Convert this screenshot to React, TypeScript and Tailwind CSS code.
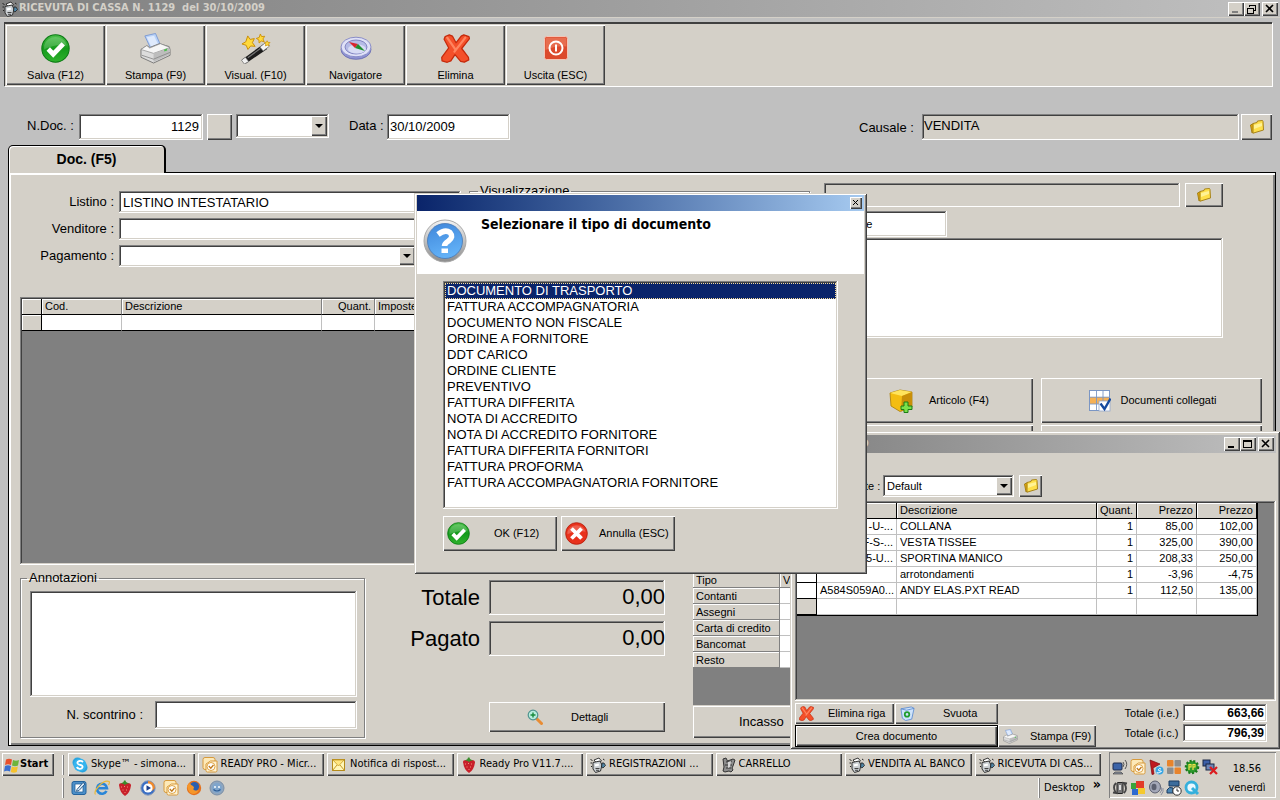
import React, { useState } from 'react';

const RAISED = 'bg-[#d4d0c8] shadow-[inset_1px_1px_#fff,inset_-1px_-1px_#404040,inset_-2px_-2px_#808080]';
const SUNKEN = 'shadow-[inset_-1px_-1px_#fff,inset_1px_1px_#808080,inset_-2px_-2px_#d4d0c8,inset_2px_2px_#404040]';

const DOCUMENT_TYPES = [
  'DOCUMENTO DI TRASPORTO',
  'FATTURA ACCOMPAGNATORIA',
  'DOCUMENTO NON FISCALE',
  'ORDINE A FORNITORE',
  'DDT CARICO',
  'ORDINE CLIENTE',
  'PREVENTIVO',
  'FATTURA DIFFERITA',
  'NOTA DI ACCREDITO',
  'NOTA DI ACCREDITO FORNITORE',
  'FATTURA DIFFERITA FORNITORI',
  'FATTURA PROFORMA',
  'FATTURA ACCOMPAGNATORIA FORNITORE',
];

const CART_ROWS = [
  { code: '-U-...', name: 'COLLANA', qty: '1', net: '85,00', gross: '102,00' },
  { code: 'F-S-...', name: 'VESTA TISSEE', qty: '1', net: '325,00', gross: '390,00' },
  { code: '5-U...', name: 'SPORTINA MANICO', qty: '1', net: '208,33', gross: '250,00' },
  { code: '', name: 'arrotondamenti', qty: '1', net: '-3,96', gross: '-4,75' },
  { code: 'A584S059A0...', name: 'ANDY ELAS.PXT READ', qty: '1', net: '112,50', gross: '135,00' },
];

/* ---------- icons ---------- */

function OkIcon({ className }: { className: string }) {
  return (
    <svg viewBox="0 0 28 28" className={className}>
      <defs>
        <linearGradient id="okg" x1="0" y1="0" x2="0" y2="1">
          <stop offset="0" stopColor="#4cc04a" />
          <stop offset="0.5" stopColor="#149a1c" />
          <stop offset="1" stopColor="#2fb32d" />
        </linearGradient>
      </defs>
      <circle cx="14" cy="14" r="13.2" fill="url(#okg)" stroke="#0b7a14" strokeWidth="1" />
      <path d="M3 11 A11.5 11.5 0 0 1 25 11 Q14 9 3 15Z" fill="#fff" opacity="0.18" />
      <path d="M7 14.5l4.8 5L21.5 9.5" fill="none" stroke="#fff" strokeWidth="4.6" strokeLinejoin="miter" strokeLinecap="butt" />
    </svg>
  );
}

function CancelIcon({ className }: { className: string }) {
  return (
    <svg viewBox="0 0 28 28" className={className}>
      <circle cx="14" cy="14" r="13.2" fill="#e8321c" stroke="#b51d0c" strokeWidth="1" />
      <path d="M3 12 A11.5 11.5 0 0 1 25 12 Q14 9 3 15Z" fill="#fff" opacity="0.22" />
      <path d="M9.500 9.500l9 9M18.500 9.500l-9 9" stroke="#fff" strokeWidth="4.600" strokeLinecap="square" />
    </svg>
  );
}

function PrinterIcon({ className }: { className: string }) {
  return (
    <svg viewBox="0 0 32 32" className={className}>
      <path d="M5 3l11-2.500 5 11.500-10 4z" fill="#b9d2f7" stroke="#6d8fd0" strokeWidth="0.8" />
      <path d="M7 4.500l7.500-1.600 4 8.500-7 2.500z" fill="#dfeafc" />
      <path d="M1 17l6-4 3 2 10-4 10 3 1 3v6l-17 8L1 25z" fill="#dcdcdc" stroke="#6f6f6f" strokeWidth="0.9" />
      <path d="M1 17l13 4 17-6-10-4-11 4.500-3-2.500z" fill="#f6f6f6" stroke="#8a8a8a" strokeWidth="0.7" />
      <path d="M14 21v9l17-8v-6z" fill="#bdbdbd" />
      <path d="M2 23l12 4 17-7" fill="none" stroke="#8a8a8a" strokeWidth="0.9" />
      <path d="M25 17l3-1v2l-3 1z" fill="#4fc04f" />
    </svg>
  );
}

function WandIcon({ className }: { className: string }) {
  return (
    <svg viewBox="0 0 32 32" className={className}>
      <path d="M2 27.500L24 11.500l4 5L6 31.500z" fill="#1c1c1c" />
      <path d="M1.500 28l4-3 3.500 4.500-4.500 2.500z" fill="#f0f0f0" stroke="#666" strokeWidth="0.7" />
      <path d="M20.500 14.500l6.500-5 3.500 4-6.500 5z" fill="#f4f4f4" stroke="#666" strokeWidth="0.7" />
      <path d="M8 25.500L21 16" stroke="#777" strokeWidth="1.2" />
      <path d="M8 3l2.4 3.6 4.4-.8-2 4.2 2.8 3.8-4.6-.4L8.200 17l-1.800-4.300L2 11.300 6 9z" fill="#ffd93b" stroke="#c98d06" strokeWidth="1" />
      <path d="M21 1l1.300 2.700 3.200-.3-1.800 2.700 1.300 2.900-3-.7-2.300 2-.2-3.100-2.700-1.600 3-1z" fill="#ffd93b" stroke="#c98d06" strokeWidth="0.9" />
      <path d="M28 8l.9 1.700 2.100.1-1.400 1.500.4 2-1.900-.8-1.800.9.200-2.100-1.300-1.500 2-.3z" fill="#ffd93b" stroke="#c98d06" strokeWidth="0.7" />
    </svg>
  );
}

function CompassIcon({ className }: { className: string }) {
  return (
    <svg viewBox="0 0 32 24" className={className}>
      <ellipse cx="16" cy="13.500" rx="15" ry="9.800" fill="#8f93d2" stroke="#6468ad" strokeWidth="0.8" />
      <ellipse cx="16" cy="11" rx="15" ry="9.800" fill="#dfe1f7" stroke="#8185c4" strokeWidth="0.9" />
      <ellipse cx="16" cy="11" rx="11" ry="7" fill="#b5bbe6" stroke="#6e72b5" strokeWidth="0.8" />
      <ellipse cx="17" cy="13" rx="9" ry="4.600" fill="#d8dcf5" />
      <path d="M9 6l9 2-3 4z" fill="#d8262d" />
      <path d="M25 15l-7-7-3 4z" fill="#1e8e2e" />
    </svg>
  );
}

function RedXIcon({ className }: { className: string }) {
  return (
    <svg viewBox="0 0 28 28" className={className}>
      <path
        d="M4 2.500L8 .8 11 2l3.500 6.500L19.500 2 22 .8l5 1.700.5 2L20 14l6.500 8.500.3 2.500-4.300 2.200-3.500-.7L13.500 20l-4 6L6 27.300 1 26l-.3-3.500L7.500 13.500 3 5z"
        fill="#f4502a"
        stroke="#c42a0c"
        strokeWidth="1.200"
        strokeLinejoin="round"
      />
      <path d="M6 3.500l8 11.500M23.500 3.500L13 17" stroke="#ff8560" strokeWidth="2.200" fill="none" strokeLinecap="round" />
    </svg>
  );
}

function PowerIcon({ className }: { className: string }) {
  return (
    <svg viewBox="0 0 24 24" className={className}>
      <rect x="0.500" y="0.500" width="23" height="23" rx="2" fill="#dc4a2c" stroke="#f3c4b6" />
      <path d="M1.500 1.500h21v9Q12 9 1.500 14z" fill="#f08a6d" opacity="0.550" />
      <circle cx="12" cy="12" r="6.500" fill="none" stroke="#fff" strokeWidth="2" />
      <path d="M12 8.500v7" stroke="#fff" strokeWidth="2" />
    </svg>
  );
}

function FolderIcon() {
  return (
    <svg viewBox="0 0 16 16" className="h-4 w-4">
      <path d="M1.500 6l3-1.500V13l-1.500 1z" fill="#e2a70b" stroke="#9c7a12" strokeWidth="0.900" />
      <path d="M4 4.500l4-1 .5-1.500 5-.5.500 1 .500 8.500L4 14.200z" fill="#ffe04a" stroke="#a8841a" strokeWidth="1" />
      <path d="M5 6l8-2v3L5 10z" fill="#fff6a8" opacity="0.800" />
    </svg>
  );
}

function QuestionIcon() {
  return (
    <svg viewBox="0 0 44 44" className="h-11 w-11 shrink-0">
      <defs>
        <linearGradient id="qring" x1="0" y1="0" x2="0" y2="1">
          <stop offset="0" stopColor="#f4f4f4" />
          <stop offset="1" stopColor="#8c8c8c" />
        </linearGradient>
        <linearGradient id="qblue" x1="0" y1="0" x2="0.300" y2="1">
          <stop offset="0" stopColor="#3f86da" />
          <stop offset="1" stopColor="#62b1f7" />
        </linearGradient>
      </defs>
      <circle cx="22" cy="22" r="21" fill="url(#qring)" stroke="#a8a8a8" />
      <circle cx="22" cy="22" r="17.500" fill="url(#qblue)" stroke="#4677b4" strokeWidth="0.800" />
      <path d="M15 15.500Q22 10 27 13.500 31 18 25.500 22q-4 2.500-4 5" fill="none" stroke="#fff" strokeWidth="5.500" />
      <rect x="18.500" y="29.500" width="6.500" height="4.500" fill="#fff" />
    </svg>
  );
}

function BoxIcon() {
  return (
    <svg viewBox="0 0 24 24" className="h-6 w-6">
      <path d="M1 4l10-3 12 2v15l-12 4.500L2 17z" fill="#f3bd12" stroke="#a87c08" strokeWidth="0.800" />
      <path d="M1 4l10-3 12 2-10 4z" fill="#ffe45c" />
      <path d="M13 7l10-4v15l-11 4.500z" fill="#c98f08" />
      <path d="M15 13h4v4h4v3.500h-4v3h-4v-3h-3V17h3z" fill="#7be04a" stroke="#1d7d16" strokeWidth="1" />
    </svg>
  );
}

function TableCheckIcon() {
  return (
    <svg viewBox="0 0 22 22" className="h-[22px] w-[22px]">
      <rect x="0.500" y="0.500" width="20" height="20" fill="#fff" stroke="#7b96c4" />
      <rect x="1" y="7" width="19" height="7" fill="#f6b155" />
      <path d="M7.500 1v20M14 1v20M1 7.200h20M1 14h20" stroke="#7b96c4" strokeWidth="0.900" />
      <rect x="10" y="11" width="11" height="10" fill="#fff" stroke="#93a8cc" strokeWidth="0.800" />
      <path d="M11.500 13.500l4 5.500L21.500 8.500" fill="none" stroke="#164a9e" strokeWidth="2.400" />
    </svg>
  );
}

function ZoomIcon() {
  return (
    <svg viewBox="0 0 16 16" className="h-4 w-4">
      <path d="M9.500 9.500l5 5" stroke="#e88c34" strokeWidth="3" strokeLinecap="round" />
      <circle cx="6" cy="6" r="4.800" fill="#b8ecdc" stroke="#4f938f" strokeWidth="1.200" />
      <path d="M6 3.500v5M3.500 6h5" stroke="#178a3c" strokeWidth="1.400" />
    </svg>
  );
}

function BinIcon() {
  return (
    <svg viewBox="0 0 16 16" className="h-[15px] w-[15px]">
      <path d="M1 3l11-2 3 1.500L12.500 14 6 15.500 2.500 13z" fill="#cfe3fb" stroke="#5b8bd0" strokeWidth="0.900" />
      <path d="M1 3l6 1.500 8-2" fill="none" stroke="#5b8bd0" strokeWidth="0.900" />
      <circle cx="7.500" cy="9" r="2.400" fill="none" stroke="#1f9c2c" strokeWidth="1.900" />
    </svg>
  );
}

function RegisterIcon() {
  return (
    <svg viewBox="0 0 16 16" className="h-4 w-4 shrink-0">
      <path d="M4 3l5-2 2.500 3-5 2z" fill="#fff" stroke="#222" strokeWidth="0.900" />
      <path d="M3 5.500L10 4l2 4-1.500 6-5 1.500L3 12z" fill="#c9ced2" stroke="#333" strokeWidth="1" />
      <path d="M4.500 7.500l4-1 .8 2-4 1z" fill="#fff" />
      <path d="M5.500 11.500h4M6 13.300h3" stroke="#444" strokeWidth="1" />
      <path d="M12 6h2l1.500 2.500L13 11l-1.500-1z" fill="#4f83a3" stroke="#222" strokeWidth="0.800" />
      <path d="M0.500 2.500l2 1M0.500 6h1.500M13 2l1.500 1M1 9.500h1" stroke="#222" strokeWidth="1" />
    </svg>
  );
}

function CartIcon() {
  return (
    <svg viewBox="0 0 16 16" className="h-4 w-4 shrink-0">
      <path d="M3 2l3-1 1.500 3L13 2l2 1-2 6-1 2 1 2-2 2-2-1-4 1-2-1 1-4z" fill="#8d8d8d" stroke="#333" strokeWidth="1" />
      <path d="M6 5l6-1M5 8h7M6 11h5" stroke="#333" strokeWidth="1" />
      <path d="M8 5l3-1-1 6-2 1z" fill="#d6d6d6" />
    </svg>
  );
}

function StrawberryIcon() {
  return (
    <svg viewBox="0 0 16 16" className="h-4 w-4 shrink-0">
      <path d="M2 5q0-2 3-2h6q3 0 3 2.500Q13 13 8 16 3 13 2 5z" fill="#c8202a" />
      <path d="M4 7h1M7 6.500h1M10 7h1M5.500 10h1M9 10h1M7.500 12.500h1" stroke="#f58b7a" strokeWidth="1" />
      <path d="M4 3.500L6.500 2 7 .5h1.500L9 2l3 1.500-3 .5-1 1.500L7 4z" fill="#3a8c2c" />
    </svg>
  );
}

function OutlookIcon() {
  return (
    <svg viewBox="0 0 16 16" className="h-4 w-4 shrink-0">
      <rect x="1" y="0.500" width="12" height="12" rx="2" fill="#fde9b8" stroke="#d79a3c" />
      <path d="M4 7l4.500-3H15v9.500q0 1.500-1.500 1.500h-8Q4 15 4 13.500z" fill="#fff3d4" stroke="#d79a3c" />
      <circle cx="9" cy="9.500" r="4" fill="#fff" stroke="#e0a546" />
      <path d="M6.800 9l2 2.200L11.500 8" fill="none" stroke="#c07a1c" strokeWidth="1.300" />
    </svg>
  );
}

function MailIcon() {
  return (
    <svg viewBox="0 0 16 16" className="h-4 w-4 shrink-0">
      <rect x="1.500" y="2.500" width="12" height="11" fill="#fff6b8" stroke="#b58b1b" />
      <path d="M1.500 13.500l4.500-5.500M13.500 13.500L9 8" fill="none" stroke="#c79a26" strokeWidth="1" />
      <path d="M2 3h11L7.500 9z" fill="#ffe680" stroke="#c79a26" strokeWidth="0.800" />
    </svg>
  );
}

function SkypeIcon() {
  return (
    <svg viewBox="0 0 16 16" className="h-4 w-4 shrink-0">
      <circle cx="5.500" cy="5.500" r="5" fill="#2aa5e0" />
      <circle cx="10.500" cy="10.500" r="5" fill="#2aa5e0" />
      <circle cx="8" cy="8" r="6.500" fill="#35b4ee" />
      <path d="M11 5Q9.500 3.600 7.500 4 5 4.500 5.500 6.300 6 7.600 8.500 8q2.500.5 2 2.200Q10 12 7.500 11.800 5.500 11.500 4.800 10" fill="none" stroke="#fff" strokeWidth="1.800" />
    </svg>
  );
}

function WindowsIcon({ className }: { className: string }) {
  return (
    <svg viewBox="0 0 16 16" className={className}>
      <path d="M2 2.500Q5 1 8 2.500L7 8Q4 6.500 1 8z" fill="#e8502c" />
      <path d="M9 3q3 1.500 6 0l-1 5.500q-3 1.500-6 0z" fill="#6fb43c" />
      <path d="M1 9q3-1.500 6 0l-1 5.500Q3 13 0 14.500z" fill="#3a6fd0" />
      <path d="M7.800 9.500q3 1.500 6 0l-1 5.500q-3 1.500-6 0z" fill="#f6c22c" />
    </svg>
  );
}

function QuickLaunchIcons() {
  return (
    <>
      <button aria-label="Mostra desktop">
        <svg viewBox="0 0 16 16" className="h-4 w-4">
          <rect x="1" y="1.500" width="14" height="13" rx="2" fill="#4c8fc9" stroke="#23629c" />
          <path d="M4 4h8v8H4z" fill="#fff" stroke="#23629c" strokeWidth="0.800" />
          <path d="M6 9.500l6-7 2 1.500-6 6.500-2.500.8z" fill="#d7e7f6" stroke="#1c4f80" strokeWidth="0.900" />
        </svg>
      </button>
      <button aria-label="Internet Explorer">
        <svg viewBox="0 0 16 16" className="h-4 w-4">
          <path d="M12.500 11A5 5 0 1 1 13 8.300H4" fill="none" stroke="#2a86d8" strokeWidth="2.600" />
          <path d="M1.500 14.500Q-.5 12 5 6T15 1.500q1 1-.5 3.500" fill="none" stroke="#e9b93a" strokeWidth="1.200" />
        </svg>
      </button>
      <button aria-label="Ready Pro"><StrawberryIcon /></button>
      <button aria-label="Media Player">
        <svg viewBox="0 0 16 16" className="h-4 w-4">
          <circle cx="8" cy="8" r="7.200" fill="#3b6fc4" stroke="#8a9cba" />
          <path d="M8 1a7 7 0 0 1 7 7l-3 3L8 4z" fill="#f08a2c" />
          <circle cx="8" cy="8" r="4.600" fill="#fff" />
          <path d="M6.500 5.300L11 8l-4.500 2.700z" fill="#1d3f8c" />
        </svg>
      </button>
      <button aria-label="Outlook"><OutlookIcon /></button>
      <button aria-label="Firefox">
        <svg viewBox="0 0 16 16" className="h-4 w-4">
          <circle cx="8" cy="8" r="7.200" fill="#e4701c" />
          <circle cx="8.500" cy="6.500" r="4.600" fill="#2c5fae" />
          <path d="M1 6q2-3 3-3 0 2 3 3 2 2 0 3 2 3 6 1-2 4-6 4-5-1-6-8z" fill="#f5962a" />
        </svg>
      </button>
      <button aria-label="Browser">
        <svg viewBox="0 0 16 16" className="h-4 w-4">
          <circle cx="8" cy="8" r="7" fill="#8fa6bf" stroke="#7b8fa6" />
          <circle cx="8" cy="8" r="5" fill="#7fa5cc" />
          <path d="M5 6h2v2H5zM9 6h2v2H9z" fill="#d9e6f2" />
          <path d="M4.500 9.500q3.500 3 7 0" fill="none" stroke="#2d5c94" strokeWidth="1.200" />
        </svg>
      </button>
    </>
  );
}

function TrayIcons() {
  return (
    <div className="grid grid-cols-6 gap-x-[2px] gap-y-[2px]">
      <svg viewBox="0 0 16 16" className="h-4 w-4">
        <rect x="1" y="4" width="9" height="7" rx="1" fill="#3c64a8" stroke="#1d2b4c" />
        <path d="M3 13h6l2 2H1z" fill="#8d93a0" stroke="#333" strokeWidth="0.600" />
        <path d="M11 3q2 2 0 5M13 1q3.500 4 0 9" fill="none" stroke="#555" />
      </svg>
      <OutlookIcon />
      <svg viewBox="0 0 16 16" className="h-4 w-4">
        <path d="M2 1l10 4-7 4 1 6-2 .5z" fill="#c01820" stroke="#7c0a10" strokeWidth="0.700" />
        <circle cx="11.500" cy="11.500" r="4" fill="#39a6e4" />
        <path d="M13 10q-2-1-2.500.5t2 1.500-1 1.500-2-.5" fill="none" stroke="#fff" strokeWidth="1" />
      </svg>
      <svg viewBox="0 0 16 16" className="h-4 w-4">
        <rect x="1" y="1" width="6.500" height="6.500" rx="1" fill="#e8842c" />
        <rect x="8.500" y="1" width="6.500" height="6.500" rx="1" fill="#8d8d8d" />
        <rect x="1" y="8.500" width="6.500" height="6.500" rx="1" fill="#8d8d8d" />
        <rect x="8.500" y="8.500" width="6.500" height="6.500" rx="1" fill="#e8842c" />
      </svg>
      <svg viewBox="0 0 16 16" className="h-4 w-4">
        <circle cx="8" cy="8" r="6" fill="#2e9c2e" stroke="#1b7b1b" strokeWidth="2.500" strokeDasharray="2 1.600" />
        <path d="M5 11V5.500h2V8H5M9 11V5.500h2V8H9" fill="none" stroke="#f4e04a" strokeWidth="1.200" />
      </svg>
      <svg viewBox="0 0 16 16" className="h-4 w-4">
        <rect x="1" y="1" width="7" height="6" fill="#3d5fa8" stroke="#1b2645" />
        <rect x="4" y="5" width="8" height="6" fill="#6d86b8" stroke="#1b2645" />
        <path d="M8 8l7 7M15 8l-7 7" stroke="#dc1c20" strokeWidth="2.200" />
      </svg>
      <svg viewBox="0 0 16 16" className="h-4 w-4">
        <path d="M4 3Q0 7 4 13l-3-.5M12 13q4-4 0-10l3 .5" fill="none" stroke="#444" strokeWidth="1.800" />
        <rect x="5" y="2.500" width="6" height="11" rx="1" fill="#777" stroke="#222" />
        <path d="M7 5h2v5H7z" fill="#ddd" />
      </svg>
      <svg viewBox="0 0 16 16" className="h-4 w-4">
        <path d="M6 1h8v7H6z" fill="#e23c28" />
        <path d="M1 3h5v6H1z" fill="#3aa43a" />
        <path d="M2 9h6v6H2z" fill="#2e6ad0" />
        <path d="M8 8h7v6H8z" fill="#f5c92e" />
      </svg>
      <svg viewBox="0 0 16 16" className="h-4 w-4">
        <ellipse cx="7" cy="7" rx="5.500" ry="6" fill="#a4a8b8" stroke="#5c6070" />
        <ellipse cx="6" cy="7" rx="2.500" ry="3.200" fill="#5c6070" />
        <path d="M13 7q2 3-1 6M15 8q1 4-2 7" fill="none" stroke="#8b8fa0" />
      </svg>
      <svg viewBox="0 0 16 16" className="h-4 w-4">
        <path d="M3 1h10v5H3z" fill="#3b6c9c" stroke="#1b3b60" />
        <path d="M1 10q2-4 6-2v5H1z" fill="#4c86b4" stroke="#1b3b60" />
        <circle cx="11" cy="11" r="4.200" fill="#fff" stroke="#333" />
        <path d="M11 8.500V11h2" fill="none" stroke="#333" />
      </svg>
      <svg viewBox="0 0 16 16" className="h-4 w-4">
        <circle cx="7.500" cy="7.500" r="5.500" fill="#e9f8ff" stroke="#35b0dc" strokeWidth="2.800" />
        <path d="M8 8l6 6" stroke="#35b0dc" strokeWidth="3" />
      </svg>
    </div>
  );
}

/* ---------- small building blocks ---------- */

function CaptionButton({ kind, label, disabled }: { kind: 'min' | 'max' | 'restore' | 'close'; label: string; disabled?: boolean }) {
  return (
    <button aria-label={label} className={`flex h-[14px] w-4 items-center justify-center ${RAISED}`}>
      <svg viewBox="0 0 12 10" className="h-[10px] w-3" fill="none" stroke={disabled ? '#808080' : '#000'} shapeRendering="crispEdges">
        {kind === 'min' && <path d="M2 8h6" strokeWidth="2" />}
        {kind === 'max' && <path d="M1.500 1.500h8v7h-8zM1 2h9" />}
        {kind === 'restore' && <path d="M3.500 3V1h6v5H8M1.500 4h6v5h-6zM3 1h7M1 4h7" />}
        {kind === 'close' && <path d="M2 1l7 7M9 1L2 8" strokeWidth="1.600" shapeRendering="auto" />}
      </svg>
    </button>
  );
}

function SelectBox({ label, options, className }: { label: string; options: string[]; className: string }) {
  return (
    <div className={`relative ${className}`}>
      <select aria-label={label} className={`h-full w-full appearance-none rounded-none bg-white px-1 ${SUNKEN}`}>
        {options.map((o) => (
          <option key={o}>{o}</option>
        ))}
      </select>
      <span className={`pointer-events-none absolute top-[2px] right-[2px] bottom-[2px] flex w-4 items-center justify-center ${RAISED}`}>
        <span className="border-x-4 border-t-4 border-x-transparent border-t-black" />
      </span>
    </div>
  );
}

function ToolButton({ label, children }: { label: string; children: React.ReactNode }) {
  return (
    <button className={`flex h-[60px] w-[99px] flex-col items-center justify-end pb-[2px] ${RAISED}`}>
      <span className="flex h-9 items-center justify-center">{children}</span>
      <span className="mt-px leading-4">{label}</span>
    </button>
  );
}

function Toolbar() {
  return (
    <div className="mt-1 mr-2 ml-1 flex gap-px border-t-2 border-l border-[#404040] bg-[#d4d0c8] pt-px pb-px pl-px shadow-[1px_1px_#fff]">
      <ToolButton label="Salva (F12)"><OkIcon className="h-[29px] w-[29px]" /></ToolButton>
      <ToolButton label="Stampa (F9)"><PrinterIcon className="h-[31px] w-[31px]" /></ToolButton>
      <ToolButton label="Visual. (F10)"><WandIcon className="h-[31px] w-[31px]" /></ToolButton>
      <ToolButton label="Navigatore"><CompassIcon className="h-6 w-8" /></ToolButton>
      <ToolButton label="Elimina"><RedXIcon className="h-[29px] w-[29px]" /></ToolButton>
      <ToolButton label="Uscita (ESC)"><PowerIcon className="h-6 w-6" /></ToolButton>
    </div>
  );
}

function DocumentHeader() {
  return (
    <div className="mt-7 flex items-start pr-2 pl-[27px] text-[13px]">
      <label htmlFor="ndoc" className="w-[52px] leading-6">N.Doc. :</label>
      <input id="ndoc" defaultValue="1129" className={`h-[26px] w-[124px] bg-white px-1 pb-[2px] text-right ${SUNKEN}`} />
      <button aria-label="Assegna numero" className={`ml-1 h-[26px] w-[25px] ${RAISED}`} />
      <SelectBox label="Serie" options={['']} className="ml-1 h-6 w-[93px]" />
      <label htmlFor="data" className="ml-5 w-[38px] leading-6">Data :</label>
      <input id="data" defaultValue="30/10/2009" className={`h-[26px] w-[123px] bg-white px-[3px] pb-[2px] ${SUNKEN}`} />
      <label htmlFor="causale" className="ml-auto w-[63px] leading-7">Causale :</label>
      <input id="causale" readOnly defaultValue="VENDITA" className={`h-[26px] w-[317px] bg-[#d4d0c8] px-[2px] pb-1 ${SUNKEN}`} />
      <button aria-label="Apri causale" className={`ml-[2px] flex h-[26px] w-[31px] items-center justify-center ${RAISED}`}><FolderIcon /></button>
    </div>
  );
}

function LinesGrid() {
  const th = 'border-r border-b border-r-[#808080] border-b-black bg-[#d4d0c8] px-[3px] font-normal shadow-[inset_1px_1px_#fff]';
  return (
    <div className={`mt-[30px] h-[268px] bg-[#808080] p-[2px] ${SUNKEN}`}>
      <table className="w-full table-fixed border-separate border-spacing-0 text-left leading-[15px]">
        <colgroup>
          <col className="w-5" />
          <col className="w-20" />
          <col className="w-[200px]" />
          <col className="w-[53px]" />
          <col />
        </colgroup>
        <thead>
          <tr>
            <th className={`${th} border-r-black`} />
            <th className={th}>Cod.</th>
            <th className={th}>Descrizione</th>
            <th className={`${th} text-right`}>Quant.</th>
            <th className={th}>Imposte</th>
          </tr>
        </thead>
        <tbody>
          <tr className="h-4">
            <td className="border-r border-b border-black bg-[#d4d0c8] shadow-[inset_1px_1px_#fff]" />
            <td className="border-r border-b border-r-[#c0c0c0] border-b-black bg-white" />
            <td className="border-r border-b border-r-[#c0c0c0] border-b-black bg-white" />
            <td className="border-r border-b border-r-[#c0c0c0] border-b-black bg-white" />
            <td className="border-b border-black bg-white" />
          </tr>
        </tbody>
      </table>
    </div>
  );
}

function DetailForm() {
  return (
    <div className="flex gap-2 text-[13px]">
      <div className="grid w-[441px] grid-cols-[94px_1fr] items-center gap-x-[5px] gap-y-[5px] pt-2">
        <label htmlFor="listino" className="text-right">Listino :</label>
        <input id="listino" defaultValue="LISTINO INTESTATARIO" className={`h-[22px] bg-white px-1 ${SUNKEN}`} />
        <label htmlFor="venditore" className="text-right">Venditore :</label>
        <input id="venditore" className={`h-[22px] bg-white px-1 ${SUNKEN}`} />
        <span className="text-right">Pagamento :</span>
        <SelectBox label="Pagamento" options={['']} className="h-[22px] w-[298px]" />
      </div>
      <fieldset className="h-20 w-[341px] border border-[#808080] shadow-[inset_1px_1px_#fff,1px_1px_#fff]">
        <legend className="ml-2 px-[2px] leading-4">Visualizzazione</legend>
      </fieldset>
    </div>
  );
}

function CustomerPanel() {
  return (
    <div className="flex w-[451px] shrink-0 flex-col">
      <div className="flex flex-col gap-1 pl-[13px]">
        <div className="flex gap-[5px]">
          <input aria-label="Intestatario" readOnly className={`h-6 w-[356px] bg-[#d4d0c8] ${SUNKEN}`} />
          <button aria-label="Apri intestatario" className={`flex h-6 w-[38px] items-center justify-center ${RAISED}`}><FolderIcon /></button>
        </div>
        <input aria-label="Destinazione" defaultValue="Generale" className={`h-[26px] w-[123px] bg-white px-[3px] ${SUNKEN}`} />
        <textarea aria-label="Indirizzo" className={`-mt-[3px] h-[100px] w-[399px] resize-none bg-white ${SUNKEN}`} />
      </div>
      <div className="mt-10 grid grid-cols-2 gap-x-2 gap-y-[2px]">
        <button className={`flex h-[45px] items-center gap-4 pl-[78px] ${RAISED}`}><BoxIcon />Articolo (F4)</button>
        <button className={`flex h-[45px] items-center gap-[10px] pl-12 ${RAISED}`}><TableCheckIcon />Documenti collegati</button>
        <button aria-label="Seleziona" className={`h-[46px] ${RAISED}`} />
        <button aria-label="Collega" className={`h-[46px] ${RAISED}`} />
      </div>
    </div>
  );
}

function Payments() {
  return (
    <div className="flex w-[200px] flex-col">
      <div className="h-[133px] bg-[#808080]">
        <table className="w-full table-fixed border-separate border-spacing-0 text-left leading-[14px]">
          <colgroup>
            <col className="w-[87px]" />
            <col />
          </colgroup>
          <tbody>
            {['Tipo', 'Contanti', 'Assegni', 'Carta di credito', 'Bancomat', 'Resto'].map((t) => (
              <tr key={t} className="h-4">
                <th className="border-r border-b border-[#808080] bg-[#d4d0c8] p-0 pl-[3px] font-normal shadow-[inset_1px_1px_#fff]">{t}</th>
                <td className={t === 'Tipo' ? 'border-b border-[#808080] bg-[#d4d0c8] px-[3px] py-0 shadow-[inset_1px_1px_#fff]' : 'border-b border-[#c0c0c0] bg-white p-0'}>
                  {t === 'Tipo' ? 'Valore' : ''}
                </td>
              </tr>
            ))}
          </tbody>
        </table>
      </div>
      <button className={`mt-px h-8 pl-[46px] text-left text-[13px] ${RAISED}`}>Incasso</button>
    </div>
  );
}

function FooterPanel() {
  return (
    <div className="mt-[5px] flex items-start">
      <fieldset className="h-[168px] w-[345px] border border-[#808080] pr-[7px] pl-[9px] text-[13px] shadow-[inset_1px_1px_#fff,1px_1px_#fff]">
        <legend className="-ml-[3px] px-[2px] leading-4">Annotazioni</legend>
        <textarea aria-label="Annotazioni" className={`mt-[5px] block h-[106px] w-full resize-none bg-white ${SUNKEN}`} />
        <div className="mt-1 flex items-center">
          <label htmlFor="scontrino" className="w-[125px] pr-3 text-right">N. scontrino :</label>
          <input id="scontrino" className={`h-7 min-w-0 flex-1 bg-white px-1 ${SUNKEN}`} />
        </div>
      </fieldset>
      <div className="ml-10 grid w-[260px] grid-cols-[75px_176px] items-center gap-x-[9px] gap-y-[6px] pt-[10px] text-[22px] leading-8">
        <label htmlFor="totale" className="text-right">Totale</label>
        <input id="totale" readOnly defaultValue="0,00" className={`h-[35px] bg-[#d4d0c8] pb-px text-right ${SUNKEN}`} />
        <label htmlFor="pagato" className="text-right">Pagato</label>
        <input id="pagato" readOnly defaultValue="0,00" className={`h-[35px] bg-[#d4d0c8] pb-px text-right ${SUNKEN}`} />
        <button className={`col-start-2 mt-10 flex h-[30px] items-center gap-7 pl-[38px] text-[11px] ${RAISED}`}><ZoomIcon />Dettagli</button>
      </div>
      <div className="ml-7 pt-[2px]"><Payments /></div>
    </div>
  );
}

function CartWindow() {
  const th = 'border-r border-b border-black bg-[#d4d0c8] px-[3px] font-normal shadow-[inset_1px_1px_#fff]';
  const td = 'border-r border-b border-[#c0c0c0] bg-white px-[3px]';
  return (
    <section aria-label="Carrello" className="absolute right-0 bottom-[51px] flex h-[318px] w-[490px] flex-col bg-[#d4d0c8] pt-1 pr-1 pb-[2px] pl-[5px] shadow-[inset_1px_1px_#d4d0c8,inset_-1px_-1px_#404040,inset_2px_2px_#fff,inset_-2px_-2px_#808080]">
      <header className="flex h-[18px] items-center bg-linear-to-r from-[#808080] to-[#c0c0c0] pr-[2px] text-[#d4d0c8]">
        <CartIcon />
        <h2 className="flex-1 font-['DejaVu_Sans_Condensed','DejaVu_Sans',sans-serif] font-bold">CARRELLO</h2>
        <CaptionButton kind="min" label="Riduci" />
        <CaptionButton kind="max" label="Ingrandisci" />
        <span className="w-[2px]" />
        <CaptionButton kind="close" label="Chiudi" />
      </header>
      <div className="mt-[22px] flex items-center pl-[45px]">
        <span className="w-[39px] text-right whitespace-nowrap">Cliente :</span>
        <SelectBox label="Cliente" options={['Default']} className="ml-1 h-[22px] w-[131px]" />
        <button aria-label="Apri cliente" className={`ml-[5px] flex h-[22px] w-[23px] items-center justify-center ${RAISED}`}><FolderIcon /></button>
      </div>
      <div className={`mt-1 flex-1 bg-[#808080] p-[2px] ${SUNKEN}`}>
        <table className="w-[461px] table-fixed border-separate border-spacing-0 border-r border-b border-black leading-[15px]">
          <colgroup>
            <col className="w-5" />
            <col className="w-20" />
            <col className="w-[200px]" />
            <col className="w-10" />
            <col className="w-[60px]" />
            <col className="w-[60px]" />
          </colgroup>
          <thead>
            <tr className="text-right">
              <th className={th} />
              <th className={`${th} text-left`}>Cod.</th>
              <th className={`${th} text-left`}>Descrizione</th>
              <th className={th}>Quant.</th>
              <th className={th}>Prezzo</th>
              <th className={th}>Prezzo</th>
            </tr>
          </thead>
          <tbody className="text-right">
            {CART_ROWS.map((r) => (
              <tr key={r.name}>
                <td className="border-r border-b border-black bg-white" />
                <td className={`${td} whitespace-nowrap`}>{r.code}</td>
                <td className={`${td} text-left`}>{r.name}</td>
                <td className={td}>{r.qty}</td>
                <td className={td}>{r.net}</td>
                <td className={td}>{r.gross}</td>
              </tr>
            ))}
            <tr className="h-4">
              <td className="border-r border-b border-black bg-[#d4d0c8]" />
              <td className={td} />
              <td className={td} />
              <td className={td} />
              <td className={td} />
              <td className={td} />
            </tr>
          </tbody>
        </table>
      </div>
      <div className="mt-[2px] flex items-start justify-between">
        <div className="flex flex-col gap-px">
          <div className="flex gap-px">
            <button className={`flex h-[21px] w-[99px] items-center gap-[14px] pl-1 ${RAISED}`}><RedXIcon className="h-[15px] w-[15px]" />Elimina riga</button>
            <button className={`flex h-[21px] w-[103px] items-center gap-7 pl-[5px] ${RAISED}`}><BinIcon />Svuota</button>
          </div>
          <div className="flex">
            <button className={`h-[22px] w-[203px] border border-black ${RAISED}`}>Crea documento</button>
            <button className={`flex h-[22px] w-[98px] items-center gap-3 pl-[5px] ${RAISED}`}><PrinterIcon className="h-[15px] w-[15px]" />Stampa (F9)</button>
          </div>
        </div>
        <div className="grid grid-cols-[auto_84px] items-center gap-x-1 gap-y-[2px] pt-px pr-[9px]">
          <label htmlFor="totie">Totale (i.e.)</label>
          <input id="totie" readOnly defaultValue="663,66" className={`h-[18px] bg-white pr-[3px] text-right text-[12px] font-bold ${SUNKEN}`} />
          <label htmlFor="totic">Totale (i.c.)</label>
          <input id="totic" readOnly defaultValue="796,39" className={`h-[18px] bg-white pr-[3px] text-right text-[12px] font-bold ${SUNKEN}`} />
        </div>
      </div>
    </section>
  );
}

function TypeDialog() {
  const [selected, setSelected] = useState(DOCUMENT_TYPES[0]);

  return (
    <div role="dialog" aria-labelledby="dlg-title" className="absolute top-[193px] left-[414px] w-[453px] bg-[#d4d0c8] p-[3px] pt-[2px] shadow-[inset_1px_1px_#d4d0c8,inset_-1px_-1px_#404040,inset_2px_2px_#fff,inset_-2px_-2px_#808080]">
      <div className="flex h-4 items-center justify-end bg-linear-to-r from-[#0a246a] to-[#a6caf0] pr-[2px]">
        <button aria-label="Chiudi" className={`flex h-3 w-3 items-center justify-center ${RAISED}`}>
          <svg viewBox="0 0 8 8" className="h-2 w-2" stroke="#000"><path d="M1 1l5 5M6 1L1 6" /></svg>
        </button>
      </div>
      <div className="flex h-[63px] items-start gap-[14px] bg-white pl-[6px]">
        <span className="mt-2"><QuestionIcon /></span>
        <h1 id="dlg-title" className="mt-1 font-['DejaVu_Sans_Condensed','DejaVu_Sans',sans-serif] text-[14px] leading-[18px] font-bold">Selezionare il tipo di documento</h1>
      </div>
      <div className="px-[26px] pt-[7px] pb-5">
        <select
          size={14}
          aria-label="Tipo di documento"
          value={selected}
          onChange={(e) => setSelected(e.target.value)}
          className={`block h-[228px] w-full overflow-hidden rounded-none bg-white p-[2px] text-[13px] ${SUNKEN}`}
        >
          {DOCUMENT_TYPES.map((t) => (
            <option
              key={t}
              className="h-4 min-h-0 px-[2px] py-0 leading-4 checked:bg-[linear-gradient(#0a246a,#0a246a)] checked:outline checked:-outline-offset-1 checked:outline-dotted checked:outline-[#f5db95] checked:[-webkit-text-fill-color:#fff]"
            >
              {t}
            </option>
          ))}
        </select>
        <div className="mt-[7px] flex gap-1">
          <button className={`flex h-[35px] w-[114px] items-center gap-6 pl-1 ${RAISED}`}><OkIcon className="h-[23px] w-[23px]" />OK (F12)</button>
          <button className={`flex h-[35px] w-[114px] items-center gap-[11px] pl-1 ${RAISED}`}><CancelIcon className="h-[23px] w-[23px]" />Annulla (ESC)</button>
        </div>
      </div>
    </div>
  );
}

function Taskbar() {
  const tasks = [
    { icon: <SkypeIcon />, text: 'Skype™ - simona...' },
    { icon: <OutlookIcon />, text: 'READY PRO - Micr...' },
    { icon: <MailIcon />, text: 'Notifica di rispost...' },
    { icon: <StrawberryIcon />, text: 'Ready Pro V11.7....' },
    { icon: <RegisterIcon />, text: 'REGISTRAZIONI ...' },
    { icon: <CartIcon />, text: 'CARRELLO' },
    { icon: <RegisterIcon />, text: 'VENDITA AL BANCO' },
    { icon: <RegisterIcon />, text: 'RICEVUTA DI CAS...' },
  ];

  return (
    <footer className="flex h-[50px] gap-2 border-t border-white bg-[#d4d0c8] pt-px pr-1 pl-[2px] font-['DejaVu_Sans_Condensed','DejaVu_Sans',sans-serif]">
      <button className={`mt-px flex h-[23px] w-[52px] items-center pl-[2px] font-bold ${RAISED}`}><WindowsIcon className="h-4 w-4 shrink-0" />Start</button>
      <div className="flex min-w-0 flex-1 flex-col">
        <div className="flex h-[25px] items-center gap-[3px]">
          <span className="mr-px h-5 w-[2px] shrink-0 border-r border-l border-r-[#808080] border-l-white" />
          {tasks.map((t) => (
            <button key={t.text} className={`flex h-[23px] min-w-0 flex-1 items-center gap-[3px] pl-1 whitespace-nowrap ${RAISED}`}>
              {t.icon}
              <span className="overflow-hidden">{t.text}</span>
            </button>
          ))}
        </div>
        <div className="flex h-[22px] items-center">
          <span className="mr-[7px] h-5 w-[2px] border-r border-l border-r-[#808080] border-l-white" />
          <div className="flex gap-[7px]"><QuickLaunchIcons /></div>
          <span className="mr-1 ml-auto h-5 w-[2px] border-r border-l border-r-[#808080] border-l-white" />
          <span>Desktop</span>
          <button aria-label="Altro" className="ml-2 pb-2 text-[14px] font-bold">»</button>
        </div>
      </div>
      <div className="flex h-[46px] w-[167px] shrink-0 pt-[7px] pl-[3px] shadow-[inset_1px_1px_#808080,inset_-1px_-1px_#fff]">
        <TrayIcons />
        <div className="flex flex-1 flex-col items-center leading-[19px] whitespace-nowrap">
          <span>18.56</span>
          <span>venerdì</span>
        </div>
      </div>
    </footer>
  );
}

export default function App() {
  return (
    <div className="relative flex min-h-screen flex-col overflow-hidden bg-[#c0c0c0] font-['Liberation_Sans',Arial,sans-serif] text-[11px] text-black">
      <header className="flex h-[18px] items-center border-b border-[#d4d0c8] bg-linear-to-r from-[#808080] to-[#c0c0c0] pr-[2px] pl-[2px]">
        <RegisterIcon />
        <h1 className="ml-px flex-1 font-['DejaVu_Sans_Condensed','DejaVu_Sans',sans-serif] font-bold whitespace-pre text-[#d4d0c8]">RICEVUTA DI CASSA N. 1129  del 30/10/2009</h1>
        <CaptionButton kind="min" label="Riduci a icona" disabled />
        <CaptionButton kind="restore" label="Ripristina" />
        <span className="w-[2px]" />
        <CaptionButton kind="close" label="Chiudi finestra" />
      </header>
      <Toolbar />
      <DocumentHeader />

      <main className="mt-[3px] mr-1 mb-1 ml-2 flex flex-1 flex-col">
        <button className="z-10 -mb-px h-7 w-[158px] rounded-t-[5px] border-t border-r-2 border-l border-black bg-[#d4d0c8] text-[14px] font-bold shadow-[inset_1px_1px_#fff]">Doc. (F5)</button>
        <div className="flex-1 border border-black bg-[#d4d0c8] pt-[10px] pr-[13px] pb-[5px] pl-[11px] shadow-[inset_1px_1px_#fff,inset_2px_2px_#fff,inset_-1px_-1px_#808080,inset_-2px_-2px_#808080]">
          <div className="flex justify-between">
            <div className="w-[790px]">
              <DetailForm />
              <LinesGrid />
            </div>
            <CustomerPanel />
          </div>
          <FooterPanel />
        </div>
      </main>

      <Taskbar />
      <CartWindow />
      <TypeDialog />
    </div>
  );
}
